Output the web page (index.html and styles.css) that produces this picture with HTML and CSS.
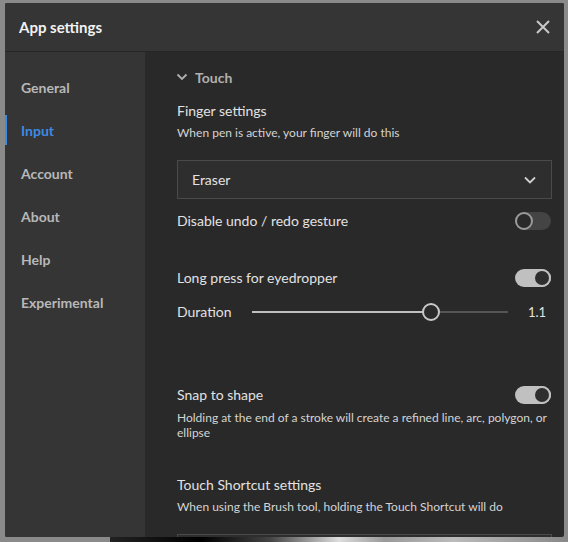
FILE: index.html
```html
<!DOCTYPE html>
<html>
<head>
  <title>App settings</title>
  <link rel="stylesheet" href="styles.css">
</head>
<body>
  <div class="dialog">
    <div class="header">
      <h1>App settings</h1>
      <button class="close" aria-label="Close">
        <svg width="16" height="16" viewBox="0 0 16 16"><path d="M2 2L14 14M14 2L2 14" stroke="#c8c8c8" stroke-width="2" fill="none"/></svg>
      </button>
    </div>

    <div class="main">
      <ul class="sidebar">
        <li>General</li>
        <li class="active">Input</li>
        <li>Account</li>
        <li>About</li>
        <li>Help</li>
        <li>Experimental</li>
      </ul>

      <div class="content">
        <div class="section-title">
          <svg width="12" height="12" viewBox="0 0 12 12"><path d="M1.5 3.5L6 8L10.5 3.5" stroke="#b0b0b0" stroke-width="1.8" fill="none"/></svg>
          Touch
        </div>

        <div class="label first">Finger settings</div>
        <div class="desc">When pen is active, your finger will do this</div>
        <div class="select">
          <span>Eraser</span>
          <svg width="14" height="14" viewBox="0 0 14 14"><path d="M2 4.5L7 9.5L12 4.5" stroke="#cfcfcf" stroke-width="1.8" fill="none"/></svg>
        </div>

        <div class="row first-row">
          <span class="label">Disable undo / redo gesture</span>
          <span class="toggle"></span>
        </div>

        <div class="row gap-lg">
          <span class="label">Long press for eyedropper</span>
          <span class="toggle on"></span>
        </div>

        <div class="row slider-row">
          <span class="label">Duration</span>
          <div class="slider">
            <div class="fill" style="width: 70%"></div>
            <div class="thumb" style="left: 70%"></div>
          </div>
          <span class="value">1.1</span>
        </div>

        <div class="row gap-xl">
          <span class="label">Snap to shape</span>
          <span class="toggle on"></span>
        </div>
        <div class="desc multi">Holding at the end of a stroke will create a refined line, arc, polygon, or ellipse</div>

        <div class="label shortcut">Touch Shortcut settings</div>
        <div class="desc">When using the Brush tool, holding the Touch Shortcut will do</div>
        <div class="select"></div>
      </div>
    </div>
  </div>
  <div class="photo"></div>
</body>
</html>
```

FILE: styles.css
```css
body {
  margin: 0;
  height: 542px;
  overflow: hidden;
  background: #8a8a8a;
  font-family: Lato, "Open Sans", sans-serif;
}

.dialog {
  width: 559px;
  height: 534px;
  margin: 3px 0 0 5px;
  background: #292929;
  border-radius: 2px;
  overflow: hidden;
  display: flex;
  flex-direction: column;
}

.header {
  height: 48px;
  flex-shrink: 0;
  background: #353535;
  border-bottom: 1px solid #262626;
  display: flex;
  align-items: center;
  justify-content: space-between;
  padding: 0 13px 0 14px;
}

.header h1 {
  margin: 0;
  font-size: 15px;
  font-weight: bold;
  color: #f2f2f2;
}

.close {
  background: none;
  border: none;
  padding: 0;
  width: 16px;
  height: 16px;
  cursor: pointer;
}

.main {
  flex: 1;
  display: flex;
  min-height: 0;
}

.sidebar {
  width: 140px;
  flex-shrink: 0;
  background: #353535;
  margin: 0;
  padding: 14px 0 0 0;
  list-style: none;
}

.sidebar li {
  position: relative;
  height: 43px;
  line-height: 43px;
  padding-left: 16px;
  font-size: 14px;
  font-weight: bold;
  color: #b8b8b8;
}

.sidebar li.active {
  color: #3f8ae2;
}

.sidebar li.active::before {
  content: "";
  position: absolute;
  left: 0;
  top: 6px;
  width: 2px;
  height: 30px;
  background: #3f8ae2;
}

.content {
  flex: 1;
  padding: 0 12px 0 32px;
  color: #e0e0e0;
}

.section-title {
  margin-top: 15px;
  height: 20px;
  display: flex;
  align-items: center;
  gap: 7px;
  margin-left: -1px;
  font-size: 14px;
  font-weight: bold;
  color: #b0b0b0;
}

.label {
  font-size: 14px;
  line-height: 20px;
  color: #e2e2e2;
}

.label.first {
  margin-top: 14px;
}

.desc {
  margin-top: 4px;
  font-size: 12px;
  line-height: 16px;
  color: #d4d4d4;
}

.desc.multi {
  line-height: 15px;
  margin-top: 3px;
}

.select {
  margin-top: 19px;
  height: 37px;
  border: 1px solid #4a4a4a;
  background: #2e2e2e;
  display: flex;
  align-items: center;
  justify-content: space-between;
  padding: 0 14px 0 14px;
  font-size: 14px;
  color: #e2e2e2;
}

.row {
  height: 24px;
  display: flex;
  align-items: center;
  justify-content: space-between;
}

.first-row {
  margin-top: 10px;
}

.gap-lg {
  margin-top: 33px;
}

.gap-xl {
  margin-top: 59px;
}

.slider-row {
  margin-top: 10px;
}

.toggle {
  position: relative;
  width: 36px;
  height: 18px;
  border-radius: 9px;
  background: #444;
  margin-right: 1px;
}

.toggle::after {
  content: "";
  position: absolute;
  left: 0;
  top: 0;
  width: 14px;
  height: 14px;
  border-radius: 50%;
  border: 2px solid #9a9a9a;
  background: #2a2a2a;
}

.toggle.on {
  background: #c0c0c0;
}

.toggle.on::after {
  left: auto;
  right: 0;
  border-color: #c0c0c0;
  background: #2e2e2e;
}

.slider {
  position: relative;
  flex: 1;
  height: 2px;
  margin: 0 20px 0 20px;
  background: #555;
}

.slider .fill {
  height: 2px;
  background: #c0c0c0;
}

.slider .thumb {
  position: absolute;
  top: -8px;
  width: 14px;
  height: 14px;
  margin-left: -9px;
  border-radius: 50%;
  border: 2px solid #c8c8c8;
  background: #2a2a2a;
}

.value {
  width: 24px;
  font-size: 13px;
  color: #e2e2e2;
  text-align: left;
}

.shortcut {
  margin-top: 35px;
}

.photo {
  height: 5px;
  margin: 0 0 0 110px;
  background: linear-gradient(90deg, #222 0%, #000 20%, #444 35%, #ddd 50%, #999 60%, #bbb 75%, #888 100%);
}
```
